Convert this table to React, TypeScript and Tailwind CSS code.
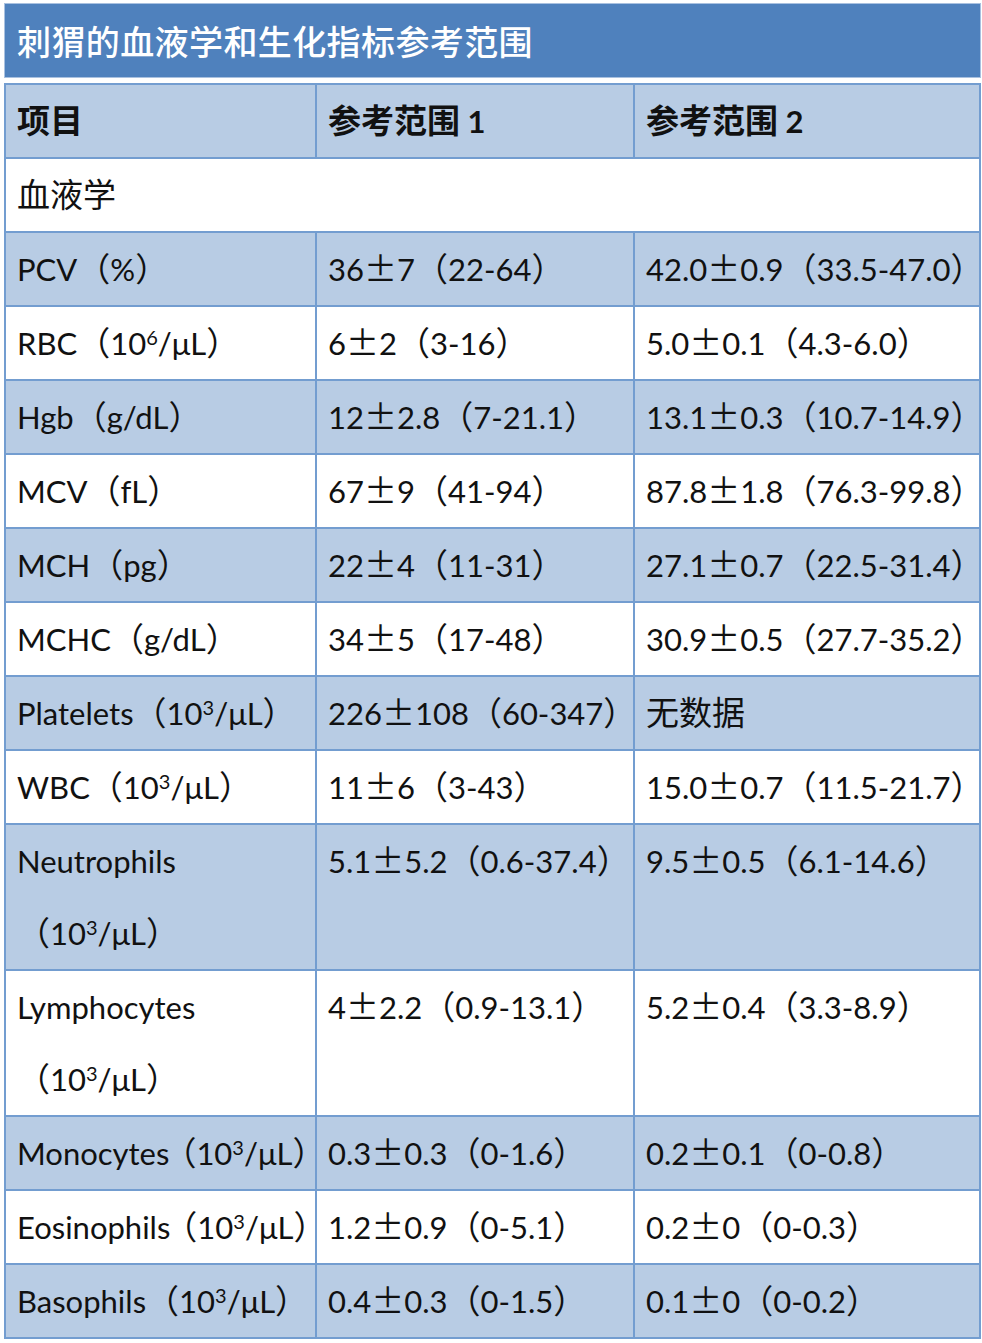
import React from "react";

const BLUE = "bg-[#b8cce4]";
const WHITE = "bg-white";
const CJK = "text-[33px] leading-none [font-family:'Noto_Sans_CJK_SC',sans-serif]";

// split a string into CJK / latin runs, {n} becomes a superscript,
// a leading ^ on a CJK run pulls it left (Word-style punctuation squeeze)
function T({ s, bold }: { s: string; bold?: boolean }) {
  const parts = s.split(/(\{\d\}|\^?[\u3000-\u9fff\uff00-\uffef±]+)/).filter(Boolean);
  return (
    <>
      {parts.map((p, i) => {
        if (/^\{\d\}$/.test(p)) {
          return (
            <sup key={i} className="text-[20px] leading-none">
              {p[1]}
            </sup>
          );
        }
        if (p.startsWith("^")) {
          return (
            <span key={i} className={CJK + " -ml-[6px]"}>
              {p.slice(1)}
            </span>
          );
        }
        if (/[\u3000-\u9fff\uff00-\uffef±]/.test(p)) {
          return (
            <span key={i} className={CJK + (bold ? " font-bold" : "")}>
              {p}
            </span>
          );
        }
        return (
          <span key={i} className={"leading-none" + (bold ? " font-bold" : "")}>
            {p}
          </span>
        );
      })}
    </>
  );
}

const rows: [string, string, string][] = [
  ["PCV（%）", "36±7（22-64）", "42.0±0.9（33.5-47.0）"],
  ["RBC（10{6}/μL）", "6±2（3-16）", "5.0±0.1（4.3-6.0）"],
  ["Hgb（g/dL）", "12±2.8（7-21.1）", "13.1±0.3（10.7-14.9）"],
  ["MCV（fL）", "67±9（41-94）", "87.8±1.8（76.3-99.8）"],
  ["MCH（pg）", "22±4（11-31）", "27.1±0.7（22.5-31.4）"],
  ["MCHC（g/dL）", "34±5（17-48）", "30.9±0.5（27.7-35.2）"],
  ["Platelets（10{3}/μL）", "226±108（60-347）", "无数据"],
  ["WBC（10{3}/μL）", "11±6（3-43）", "15.0±0.7（11.5-21.7）"],
  ["Neutrophils\n（10{3}/μL）", "5.1±5.2（0.6-37.4）", "9.5±0.5（6.1-14.6）"],
  ["Lymphocytes\n（10{3}/μL）", "4±2.2（0.9-13.1）", "5.2±0.4（3.3-8.9）"],
  ["Monocytes^（10{3}/μL）", "0.3±0.3（0-1.6）", "0.2±0.1（0-0.8）"],
  ["Eosinophils^（10{3}/μL）", "1.2±0.9（0-5.1）", "0.2±0（0-0.3）"],
  ["Basophils（10{3}/μL）", "0.4±0.3（0-1.5）", "0.1±0（0-0.2）"],
];

const cell =
  "border-2 border-[#739dd0] pl-[11px] pr-0 py-0 align-top whitespace-pre text-left font-normal";

export default function App() {
  return (
    <div className="w-[982px] min-h-[1343px] bg-white pl-[4px] pt-[3px] text-[31px] leading-[72px] text-[#111] [font-family:Lato,'Noto_Sans_CJK_SC',sans-serif]">
      {/* title bar */}
      <div className="w-[977px] h-[75px] border border-[#a9c1e0] bg-[#4f81bd] pl-[12px] flex items-center">
        <span className="text-[34px] tracking-[0.4px] leading-none text-white font-medium [font-family:'Noto_Sans_CJK_SC',sans-serif]">
          刺猬的血液学和生化指标参考范围
        </span>
      </div>

      <table className="mt-[5px] w-[977px] table-fixed border-collapse">
        <colgroup>
          <col className="w-[311px]" />
          <col className="w-[318px]" />
          <col />
        </colgroup>
        <thead>
          <tr className={BLUE}>
            <th className={cell}>
              <T s="项目" bold />
            </th>
            <th className={cell}>
              <T s="参考范围 1" bold />
            </th>
            <th className={cell}>
              <T s="参考范围 2" bold />
            </th>
          </tr>
        </thead>
        <tbody>
          <tr className={WHITE}>
            <td colSpan={3} className={cell}>
              <T s="血液学" />
            </td>
          </tr>
          {rows.map((r, i) => (
            <tr key={r[0]} className={i % 2 === 0 ? BLUE : WHITE}>
              {r.map((c, j) => (
                <td key={j} className={cell}>
                  <T s={c} />
                </td>
              ))}
            </tr>
          ))}
        </tbody>
      </table>
    </div>
  );
}
